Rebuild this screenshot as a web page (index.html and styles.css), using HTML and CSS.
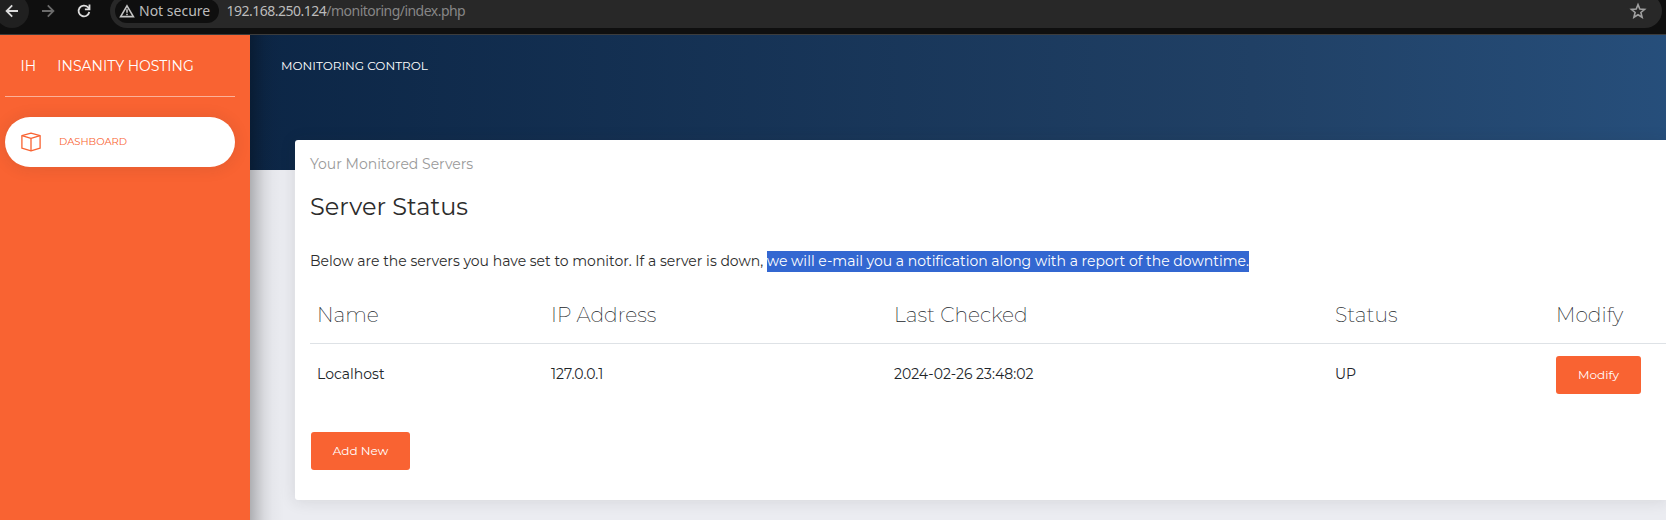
FILE: index.html
```html
<!DOCTYPE html>
<html lang="en">
<head>
<meta charset="utf-8">
<title>Insanity Hosting</title>
<link rel="stylesheet" href="styles.css">
</head>
<body>
<div class="toolbar">
  <div class="nav-btn nav-back">
    <svg width="14" height="14" viewBox="0 0 14 14" fill="none" stroke="#dcdcdc" stroke-width="1.8"><path d="M13 7H2M7.2 1.4 1.6 7l5.6 5.6"/></svg>
  </div>
  <svg class="nav-forward" width="14" height="14" viewBox="0 0 14 14" fill="none" stroke="#6b6b6b" stroke-width="1.8"><path d="M1 7h11M6.8 1.4 12.4 7l-5.6 5.6"/></svg>
  <svg class="nav-reload" width="14" height="14" viewBox="0 0 14 14" fill="none" stroke="#dcdcdc" stroke-width="1.8"><path d="M12.3 8A5.4 5.4 0 1 1 10.9 3.2L12.4 5"/><path d="M12.5.6V5.4H7.9"/></svg>
  <div class="omnibox">
    <div class="chip">
      <svg width="16" height="14" viewBox="0 0 16 14" fill="none" stroke="#c4c4c4" stroke-width="1.6"><path d="M8 1.8 14.4 12.6H1.6Z"/><path d="M8 5.2v3.6M8 9.8v1.5"/></svg>
      <span>Not secure</span>
    </div>
    <div class="url"><span class="host">192.168.250.124</span>/monitoring/index.php</div>
    <svg class="star" width="18" height="18" viewBox="0 0 18 18" fill="none" stroke="#a0a0a0" stroke-width="1.6"><path d="M9 2.6 10.8 7l4.8.4-3.7 3.1 1.2 4.7L9 12.7l-4.1 2.5 1.2-4.7L2.4 7.4 7.2 7Z"/></svg>
  </div>
</div>
<div class="page">
  <aside class="sidebar">
    <div class="brand"><span class="brand-mini">IH</span><span>INSANITY HOSTING</span></div>
    <a class="nav-item">
      <svg width="20" height="20" viewBox="0 0 20 20" fill="none" stroke="#f96332" stroke-width="1.3" stroke-linejoin="round"><path d="M.9 3.6 10 1.1l9.1 2.5v12.6L10 18.9.9 16.2Z"/><path d="M.9 3.6 10 6.4l9.1-2.8M10 6.4v12.5"/></svg>
      <span class="nav-label">DASHBOARD</span>
    </a>
  </aside>
  <main class="main">
    <header class="panel-header"><span>MONITORING CONTROL</span></header>
    <section class="card">
      <p class="category">Your Monitored Servers</p>
      <h4 class="title">Server Status</h4>
      <p class="intro">Below are the servers you have set to monitor. If a server is down, <span class="selected">we will e-mail you a notification along with a report of the downtime.</span></p>
      <table class="servers">
        <colgroup><col class="c-name"><col class="c-ip"><col class="c-checked"><col class="c-status"><col></colgroup>
        <thead><tr><th>Name</th><th>IP Address</th><th>Last Checked</th><th>Status</th><th>Modify</th></tr></thead>
        <tbody><tr><td>Localhost</td><td>127.0.0.1</td><td>2024-02-26 23:48:02</td><td>UP</td><td class="action"><a class="btn">Modify</a></td></tr></tbody>
      </table>
      <a class="btn btn-add">Add New</a>
    </section>
  </main>
</div>
</body>
</html>
```
FILE: styles.css
```css
* { box-sizing: border-box; }
html, body { height: 100%; }
body {
  margin: 0;
  overflow: hidden;
  display: flex;
  flex-direction: column;
  font: 400 14px/21px Montserrat, Inter, sans-serif;
  color: #2c2c2c;
  background: #ebecf1;
}
p, h4 { margin: 0; }
svg { display: block; flex: none; }

.toolbar {
  flex: none;
  height: 35px;
  display: flex;
  align-items: center;
  padding: 0 4px 13px 0;
  background: #0f0f0f;
  border-bottom: 1px solid #3c3c3c;
  font: 400 14px/20px "Noto Sans", sans-serif;
}
.nav-btn {
  flex: none;
  width: 34px;
  height: 34px;
  margin-left: -5px;
  border-radius: 50%;
  background: #202020;
  display: flex;
  align-items: center;
  justify-content: center;
}
.nav-forward { margin-left: 12px; }
.nav-reload { margin-left: 22px; }
.omnibox {
  flex: 1;
  height: 34px;
  margin-left: 19px;
  border-radius: 17px;
  background: #282828;
  display: flex;
  align-items: center;
  padding: 0 15px 0 5px;
}
.chip {
  width: 104px;
  height: 24px;
  border-radius: 12px;
  background: #0f0f0f;
  color: #bcbcbc;
  display: flex;
  align-items: center;
  gap: 4px;
  padding-left: 4px;
  white-space: nowrap;
}
.url { margin-left: 7.5px; color: #868686; letter-spacing: -0.53px; flex: 1; }
.host { color: #bcbcbc; letter-spacing: -0.5px; }

.page { flex: 1; display: flex; min-height: 0; overflow: hidden; }
.sidebar {
  position: relative;
  z-index: 1;
  flex: none;
  width: 250px;
  padding: 0 15px 0 5px;
  background: #f96332;
  color: #fff;
}
/* edge shadow, even along the full height */
.sidebar::after {
  content: "";
  position: absolute;
  top: 0;
  bottom: 0;
  left: 100%;
  width: 34px;
  background: linear-gradient(to right, rgba(0, 0, 0, .26), rgba(0, 0, 0, .17) 20%, rgba(0, 0, 0, .08) 42%, rgba(0, 0, 0, .025) 66%, transparent);
}
.brand {
  height: 62px;
  display: flex;
  align-items: center;
  padding: 2px 0 0 15.5px;
  border-bottom: 1px solid rgba(255, 255, 255, .5);
}
.brand-mini { width: 36.8px; }
.nav-item {
  display: flex;
  align-items: center;
  height: 50px;
  margin-top: 20px;
  padding-left: 15.5px;
  gap: 18.5px;
  border-radius: 30px;
  background: #fff;
  color: #f96332;
  font-size: 10px;
  box-shadow: 0 1px 15px 1px rgba(39, 39, 39, .1);
}
.nav-label { padding-bottom: 2px; }
.main { flex: 1; min-width: 0; }
.panel-header {
  height: 135px;
  padding: 20px 31px;
  color: #fff;
  font-size: 12px;
  background: linear-gradient(to right, #0c2646 0, #204065 1002px, #2a5788 1670px);
}
.card {
  position: relative;
  height: 360px;
  margin: -30px 0 0 45px;
  padding: 14px 0 0 15px;
  background: #fff;
  border-radius: 3px 0 0 3px;
  box-shadow: 0 1px 15px 1px rgba(39, 39, 39, .1);
}
.category { color: #9a9a9a; }
.title { margin-top: 14px; font-size: 24px; line-height: 36px; font-weight: 400; }
.intro { margin-top: 26px; }
.selected { display: inline-block; background: #3367d1; color: #fff; }
.servers {
  table-layout: fixed;
  width: 100%;
  margin-top: 14px;
  border-collapse: collapse;
  color: #212529;
  text-align: left;
}
.c-name { width: 234px; }
.c-ip { width: 343px; }
.c-checked { width: 441px; }
.c-status { width: 221px; }
th {
  height: 57px;
  padding: 0 7px;
  font-size: 20.3px;
  font-weight: 200;
  border-bottom: 1px solid #dee2e6;
}
td { height: 63px; padding: 0 7px; }
.action { padding: 1px 7px 0; }
.btn {
  display: block;
  width: 85px;
  height: 38px;
  border-radius: 3px;
  background: #f96332;
  color: #fff;
  font-size: 12px;
  line-height: 38px;
  text-align: center;
}
.btn-add { width: 99px; margin: 26px 1px 0; }
```
